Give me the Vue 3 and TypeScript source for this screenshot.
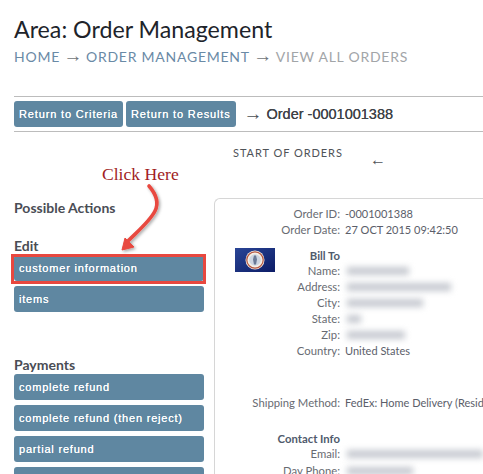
<script setup lang="ts">
interface Row { label: string; value?: string; blur?: number; head?: boolean; gap?: number }
const rows: Row[] = [
  { label: 'Bill To', head: true, gap: 10 },
  { label: 'Name:', blur: 62 },
  { label: 'Address:', blur: 104 },
  { label: 'City:', blur: 76 },
  { label: 'State:', blur: 14 },
  { label: 'Zip:', blur: 58 },
  { label: 'Country:', value: 'United States' },
  { label: 'Shipping Method:', value: 'FedEx: Home Delivery (Residential)', gap: 36 },
  { label: 'Contact Info', head: true, gap: 20 },
  { label: 'Email:', blur: 150 },
  { label: 'Day Phone:', blur: 66, gap: 1 },
]
const editActions = ['customer information', 'items']
const paymentActions = ['complete refund', 'complete refund (then reject)', 'partial refund', 'void']
</script>

<template>
  <div class="page">
    <h1 class="title">Area: Order Management</h1>
    <nav class="crumbs">
      <span class="link">HOME</span><span class="sep">→</span>
      <span class="link">ORDER MANAGEMENT</span><span class="sep">→</span>
      <span class="current">VIEW ALL ORDERS</span>
    </nav>

    <div class="toolbar">
      <button class="btn">Return to Criteria</button>
      <button class="btn">Return to Results</button>
      <span class="tool-arrow">→</span>
      <span class="order">Order -0001001388</span>
    </div>

    <div class="pager">
      <span class="pager-text">START OF ORDERS</span>
      <span class="pager-arrow">←</span>
    </div>

    <div class="columns">
      <aside class="side">
        <h3 class="possible">Possible Actions</h3>
        <h3 class="group edit">Edit</h3>
        <button v-for="a in editActions" :key="a" class="btn action">{{ a }}</button>
        <h3 class="group payments">Payments</h3>
        <button v-for="a in paymentActions" :key="a" class="btn action pay">{{ a }}</button>
      </aside>

      <section class="panel">
        <div class="row"><span class="label">Order ID:</span><span class="value">-0001001388</span></div>
        <div class="row"><span class="label">Order Date:</span><span class="value">27 OCT 2015 09:42:50</span></div>
        <svg class="flag" viewBox="0 0 40 24" width="40" height="24">
          <defs>
            <linearGradient id="fl" x1="0" y1="0" x2="1" y2="1">
              <stop offset="0" stop-color="#2a4596" />
              <stop offset="1" stop-color="#0c1c66" />
            </linearGradient>
          </defs>
          <rect width="40" height="24" fill="url(#fl)" />
          <circle cx="20" cy="12" r="9.5" fill="#f4efe6" />
          <circle cx="20" cy="12" r="8.2" fill="none" stroke="#b4553f" stroke-width="1.2" />
          <circle cx="20" cy="12" r="5.8" fill="#cdd6e2" />
          <path d="M19 7.5h2l1 4-1 5h-2l-1-5z" fill="#6a7a96" />
        </svg>
        <div
          v-for="r in rows"
          :key="r.label"
          class="row"
          :class="{ 'head-row': r.head }"
          :style="r.gap ? { marginTop: r.gap + 'px' } : undefined"
        >
          <span class="label" :class="{ head: r.head }">{{ r.label }}</span>
          <span v-if="r.value" class="value">{{ r.value }}</span>
          <span v-else-if="r.blur" class="blurred" :style="{ width: r.blur + 'px' }"></span>
        </div>
      </section>
    </div>

    <span class="note">Click Here</span>
    <div class="highlight"></div>
    <svg class="pointer" width="483" height="474" viewBox="0 0 483 474">
      <defs>
        <filter id="sh" x="-30%" y="-30%" width="160%" height="160%">
          <feDropShadow dx="1.5" dy="1.5" stdDeviation="1.5" flood-color="#000" flood-opacity="0.35" />
        </filter>
      </defs>
      <g filter="url(#sh)">
        <path d="M149 186C156 194 159 203 155 211C150 221 138 231 128 241" fill="none" stroke="#e8483f" stroke-width="3.6" stroke-linecap="round" />
        <path d="M122 250L125 238L134 247Z" fill="#e8483f" stroke="#e8483f" stroke-width="1" stroke-linejoin="round" />
      </g>
    </svg>
  </div>
</template>

<style scoped>
.page {
  position: relative;
  width: 483px;
  height: 474px;
  overflow: hidden;
  background: #fff;
  box-sizing: border-box;
  padding: 14px 0 0 14px;
  font-family: Lato, "Open Sans", sans-serif;
}
.title {
  margin: 0;
  font-size: 23.2px;
  line-height: 30px;
  font-weight: 400;
  color: #20232a;
}
.crumbs {
  margin-top: 4px;
  height: 18px;
  line-height: 18px;
  font-size: 14px;
  letter-spacing: 0.75px;
  white-space: nowrap;
}
.link { color: #6a8aa6; }
.current { color: #a2a5a8; }
.sep {
  color: #6f7478;
  margin: 0 3.5px;
  font-family: "Liberation Sans", sans-serif;
  font-size: 19px;
  line-height: 0;
  letter-spacing: 0;
}
.toolbar {
  margin-top: 30px;
  height: 34px;
  border-top: 1px solid #bcbcbc;
  border-bottom: 1px solid #bcbcbc;
  display: flex;
  align-items: center;
  gap: 3px;
}
.btn {
  border: 0;
  border-radius: 3px;
  background: #5f87a1;
  color: #fff;
  height: 26px;
  padding: 0 5px;
  font-family: "Liberation Sans", Arial, sans-serif;
  font-size: 11px;
  font-weight: 400;
  letter-spacing: 0.85px;
  text-shadow: 0 0 0.6px #fff;
  text-align: left;
  white-space: nowrap;
}
.tool-arrow {
  margin: -2px 0 0 5px;
  font-family: "Liberation Sans", sans-serif;
  font-size: 19px;
  line-height: 1;
  color: #4a4f55;
}
.order {
  margin-left: 1px;
  font-family: "Liberation Sans", Arial, sans-serif;
  font-size: 14.5px;
  font-weight: 400;
  text-shadow: 0 0 0.6px #3f4348;
  color: #3f4348;
}
.pager {
  height: 38px;
  position: relative;
  margin-left: 219px;
  padding-top: 14px;
  box-sizing: border-box;
  color: #4f5358;
}
.pager-text {
  display: block;
  font-size: 11px;
  line-height: 14px;
  letter-spacing: 0.95px;
}
.pager-arrow {
  position: absolute;
  left: 137px;
  top: 21px;
  font-family: "Liberation Sans", sans-serif;
  font-size: 16px;
  line-height: 14px;
}
.columns {
  display: flex;
  gap: 10px;
  margin-top: 28px;
}
.side {
  width: 190px;
  flex: none;
  display: flex;
  flex-direction: column;
}
.side h3 {
  margin: 0;
  font-size: 14px;
  line-height: 18px;
  font-weight: 700;
  color: #4a4d55;
}
.possible { margin-top: 1px !important; }
.edit { margin-top: 20px !important; }
.payments { margin-top: 39px !important; }
.action {
  flex: none;
  width: 190px;
  margin-bottom: 5px;
  height: 26px;
  letter-spacing: 0.8px;
}
.panel {
  position: relative;
  flex: 1;
  min-width: 0;
  padding-top: 7px;
  border-top: 1px solid #d6d6d6;
  border-left: 1px solid #d6d6d6;
  border-top-left-radius: 6px;
  font-size: 11px;
  color: #5b5e66;
}
.row {
  display: flex;
  height: 16px;
  line-height: 16px;
  white-space: nowrap;
}
.head-row { height: 15px; }
.label {
  width: 125px;
  flex: none;
  text-align: right;
  font-size: 11.3px;
  color: #686b72;
}
.label.head { font-weight: 700; color: #4f5a6c; }
.value { margin-left: 5px; color: #5b5e6a; }
.blurred {
  margin: 4px 0 0 7px;
  height: 8px;
  background: #c6c9d0;
  filter: blur(3px);
}
.flag {
  position: absolute;
  left: 20px;
  top: 49px;
}
.note {
  position: absolute;
  left: 102px;
  top: 164px;
  font-family: "Liberation Serif", serif;
  font-size: 17.6px;
  line-height: 20px;
  color: #a11d24;
}
.highlight {
  position: absolute;
  left: 11px;
  top: 254px;
  width: 195px;
  height: 30px;
  box-sizing: border-box;
  border: 3px solid #e8483f;
}
.pointer {
  position: absolute;
  left: 0;
  top: 0;
  pointer-events: none;
}
</style>
